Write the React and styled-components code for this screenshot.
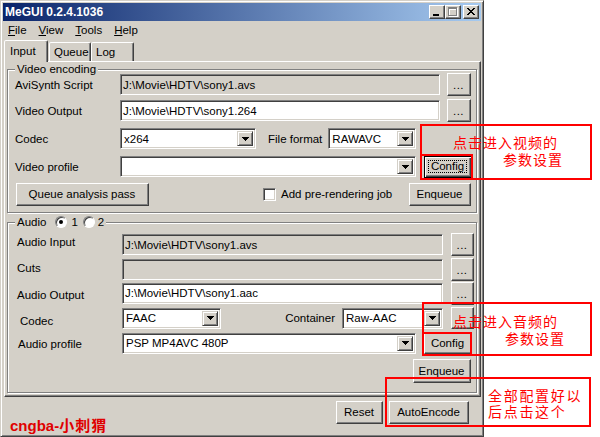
import React from "react";
import styled, { createGlobalStyle } from "styled-components";

const FACE = "#D4D0C8";
const FONT = `"Liberation Sans", Arial, sans-serif`;
const CJK = `"Noto Sans CJK SC", "Noto Sans CJK JP", sans-serif`;

const GlobalStyle = createGlobalStyle`
  html, body { margin: 0; padding: 0; background: #fff; }
  body { font-family: ${FONT}; font-size: 11.5px; color: #000; }
  * { box-sizing: border-box; }
`;

const Page = styled.div`
  position: relative;
  width: 600px;
  height: 437px;
  overflow: hidden;
  background: #fff;
`;

const Window = styled.div`
  width: 484px;
  height: 437px;
  background: ${FACE};
  border: 1px solid;
  border-color: ${FACE} #404040 #404040 ${FACE};
  box-shadow: inset 1px 1px 0 #fff, inset -1px -1px 0 #808080;
  padding: 2px;
  display: flex;
  flex-direction: column;
`;

const TitleBar = styled.div`
  height: 18px;
  flex: none;
  display: flex;
  align-items: center;
  padding: 0 2px;
  background: linear-gradient(to right, #0a246a, #a6caf0);
`;

const Title = styled.span`
  flex: 1;
  color: #fff;
  font-weight: bold;
  font-size: 12px;
  white-space: nowrap;
`;

const CaptionButton = styled.div`
  width: 16px;
  height: 14px;
  flex: none;
  margin-left: ${(p) => p.$ml || 0}px;
  background: ${FACE};
  border: 1px solid;
  border-color: #fff #404040 #404040 #fff;
  box-shadow: inset -1px -1px 0 #808080;
  display: flex;
`;

const MenuBar = styled.div`
  height: 18px;
  flex: none;
  display: flex;
  align-items: center;
  gap: 12px;
  padding-left: 5px;
`;

const MenuItem = styled.span`
  white-space: nowrap;
  u { text-decoration: underline; }
`;

const TabStrip = styled.div`
  height: 22px;
  flex: none;
  display: flex;
  align-items: flex-end;
  padding-left: 1px;
`;

const Tab = styled.div`
  width: ${(p) => p.$w}px;
  height: ${(p) => (p.$active ? 22 : 19)}px;
  margin-bottom: ${(p) => (p.$active ? -1 : 0)}px;
  margin-right: ${(p) => (p.$active ? 1 : 0)}px;
  position: relative;
  z-index: ${(p) => (p.$active ? 2 : 0)};
  background: ${FACE};
  border: 1px solid;
  border-bottom: none;
  border-color: #fff #404040 transparent #fff;
  box-shadow: inset -1px 0 0 #808080;
  border-radius: 2px 2px 0 0;
  padding: ${(p) => (p.$active ? "0 0 1px 5px" : "0 0 0 4px")};
  display: flex;
  align-items: center;
  white-space: nowrap;
`;

const Panel = styled.div`
  width: 477px;
  height: 336px;
  flex: none;
  margin-left: 1px;
  border: 1px solid;
  border-color: #fff #404040 #404040 #fff;
  box-shadow: inset -1px -1px 0 #808080;
  padding: 0 3px 0 2px;
  display: flex;
  flex-direction: column;
`;

const Group = styled.div`
  margin-top: ${(p) => p.$mt}px;
  border: 1px solid #808080;
  box-shadow: inset 1px 1px 0 #fff, 1px 1px 0 #fff;
  display: flex;
  flex-direction: column;
`;

const Legend = styled.div`
  align-self: flex-start;
  margin: -8px 0 -6px 7px;
  padding: 0 2px;
  height: 14px;
  line-height: 14px;
  background: ${FACE};
  display: flex;
  align-items: center;
  white-space: nowrap;
  position: relative;
`;

const GroupBody = styled.div`
  display: flex;
  flex-direction: column;
  padding: ${(p) => p.$pad};
`;

const Row = styled.div`
  display: flex;
  align-items: center;
  height: ${(p) => p.$h}px;
`;

const Label = styled.span`
  width: ${(p) => (p.$w === undefined ? "105px" : p.$w)};
  flex: none;
  white-space: nowrap;
  padding-left: ${(p) => p.$dx || 0}px;
  padding-top: ${(p) => (p.$dy > 0 ? p.$dy * 2 : 0)}px;
  padding-bottom: ${(p) => (p.$dy < 0 ? -p.$dy * 2 : 0)}px;
  margin-left: ${(p) => (p.$ml === "auto" ? "auto" : `${p.$ml || 0}px`)};
`;

const sunken = `
  border: 1px solid;
  border-color: #808080 #fff #fff #808080;
  box-shadow: inset 1px 1px 0 #404040, inset -1px -1px 0 ${FACE};
`;

const TextBox = styled.div`
  flex: 1;
  min-width: 0;
  height: 21px;
  background: ${(p) => (p.$disabled ? FACE : "#fff")};
  ${sunken}
  padding: 0 3px 0 2px;
  display: flex;
  align-items: center;
  white-space: nowrap;
  overflow: hidden;
`;

const Combo = styled.div`
  width: ${(p) => p.$w}px;
  flex: none;
  height: 21px;
  margin-left: ${(p) => p.$ml || 0}px;
  background: #fff;
  ${sunken}
  padding: 2px;
  display: flex;
  align-items: stretch;
`;

const ComboText = styled.span`
  flex: 1;
  padding-left: 1px;
  display: flex;
  align-items: center;
  white-space: nowrap;
  overflow: hidden;
`;

const DropButton = styled.span`
  width: 16px;
  flex: none;
  background: ${FACE};
  border: 1px solid;
  border-color: ${FACE} #404040 #404040 ${FACE};
  box-shadow: inset 1px 1px 0 #fff, inset -1px -1px 0 #808080;
  display: flex;
  align-items: center;
  justify-content: center;
`;

const Button = styled.div`
  width: ${(p) => p.$w}px;
  height: ${(p) => p.$h || 23}px;
  flex: none;
  margin-left: ${(p) => (p.$ml === "auto" ? "auto" : `${p.$ml || 0}px`)};
  margin-right: ${(p) => p.$mr || 0}px;
  background: ${FACE};
  border: 1px solid;
  border-color: ${(p) => (p.$default ? "#000" : "#fff #404040 #404040 #fff")};
  box-shadow: ${(p) =>
    p.$default
      ? "inset 1px 1px 0 #fff, inset -1px -1px 0 #404040, inset -2px -2px 0 #808080"
      : `inset -1px -1px 0 #808080, inset 1px 1px 0 ${FACE}`};
  display: flex;
  align-items: center;
  justify-content: center;
  white-space: nowrap;
  padding: ${(p) => (p.$default ? "3px 4px 4px 3px" : "0 1px 1px 0")};
`;

const FocusRect = styled.span`
  flex: 1;
  align-self: stretch;
  border: 1px dotted #000;
  display: flex;
  align-items: center;
  justify-content: center;
`;

const Dots = styled.span`
  padding-top: 2px;
  letter-spacing: 0.5px;
`;

const CheckBox = styled.span`
  width: 13px;
  height: 13px;
  flex: none;
  margin-left: ${(p) => p.$ml || 0}px;
  background: #fff;
  ${sunken}
`;

const CheckLabel = styled.span`
  margin-left: 5px;
  white-space: nowrap;
`;

const Radio = styled.span`
  width: 12px;
  height: 12px;
  flex: none;
  margin-left: ${(p) => p.$ml || 0}px;
  border-radius: 50%;
  background: #fff;
  border: 1px solid;
  border-color: #808080 #fff #fff #808080;
  box-shadow: inset 1px 1px 0 #404040, 0 0 0 0 transparent;
  display: flex;
  align-items: center;
  justify-content: center;
  &::after {
    content: "";
    width: 4px;
    height: 4px;
    border-radius: 50%;
    background: ${(p) => (p.$checked ? "#000" : "transparent")};
  }
`;

const RadioText = styled.span`
  margin-left: ${(p) => p.$ml}px;
`;

const Footer = styled.div`
  flex: 1;
  display: flex;
  align-items: flex-start;
  padding: 4px 12px 0 7px;
`;

const Watermark = styled.span`
  margin-top: 16px;
  line-height: 16px;
  color: #e00000;
  font-weight: bold;
  white-space: nowrap;
`;

const WatermarkLatin = styled.span`
  font-family: ${FONT};
  font-size: 15px;
`;

const WatermarkCJK = styled.span`
  font-family: ${CJK};
  font-size: 15px;
  letter-spacing: 1px;
`;

const RedBox = styled.div`
  position: absolute;
  left: ${(p) => p.$x}px;
  top: ${(p) => p.$y}px;
  width: ${(p) => p.$w}px;
  height: ${(p) => p.$h}px;
  border: 2px solid #f00;
  pointer-events: none;
`;

const Note = styled.div`
  position: absolute;
  left: ${(p) => p.$x}px;
  top: ${(p) => p.$y}px;
  color: #f00;
  font-family: ${CJK};
  font-size: 14px;
  letter-spacing: ${(p) => p.$ls || 1}px;
  line-height: ${(p) => p.$lh || 17}px;
  white-space: nowrap;
  pointer-events: none;
`;

const NoteLine = styled.div`
  padding-left: ${(p) => p.$indent || 0}px;
`;

const Arrow = () => (
  <svg width="7" height="4" viewBox="0 0 7 4">
    <path d="M0 0h7v1h-1v1h-1v1h-1v1h-1v-1h-1v-1h-1v-1h-1z" fill="#000" />
  </svg>
);

const MinIcon = () => (
  <svg width="14" height="12" viewBox="0 0 14 12">
    <rect x="3" y="8" width="6" height="2" fill="#000" />
  </svg>
);

const MaxIcon = () => (
  <svg width="14" height="12" viewBox="0 0 14 12">
    <path d="M3 2h9v9h-9z M4 4v6h7v-6z" fill="#fff" fillRule="evenodd" />
    <path d="M2 1h9v9h-9z M3 3v6h7v-6z" fill="#808080" fillRule="evenodd" />
  </svg>
);

const CloseIcon = () => {
  const rects = [];
  for (let i = 0; i < 7; i++) {
    rects.push(<rect key={`a${i}`} x={3 + i} y={2 + i} width="2" height="1" fill="#000" />);
    rects.push(<rect key={`b${i}`} x={9 - i} y={2 + i} width="2" height="1" fill="#000" />);
  }
  return (
    <svg width="14" height="12" viewBox="0 0 14 12">
      {rects}
    </svg>
  );
};

const ComboBox = ({ w, ml, children }) => (
  <Combo $w={w} $ml={ml}>
    <ComboText>{children}</ComboText>
    <DropButton>
      <Arrow />
    </DropButton>
  </Combo>
);

const Browse = ({ w = 24, ml = 7 }) => (
  <Button $w={w} $ml={ml}>
    <Dots>...</Dots>
  </Button>
);

export default function App() {
  return (
    <>
      <GlobalStyle />
      <Page>
        <Window>
          <TitleBar>
            <Title>MeGUI 0.2.4.1036</Title>
            <CaptionButton>
              <MinIcon />
            </CaptionButton>
            <CaptionButton>
              <MaxIcon />
            </CaptionButton>
            <CaptionButton $ml={2}>
              <CloseIcon />
            </CaptionButton>
          </TitleBar>

          <MenuBar>
            <MenuItem>
              <u>F</u>ile
            </MenuItem>
            <MenuItem>
              <u>V</u>iew
            </MenuItem>
            <MenuItem>
              <u>T</u>ools
            </MenuItem>
            <MenuItem>
              <u>H</u>elp
            </MenuItem>
          </MenuBar>

          <TabStrip>
            <Tab $w={44} $active>
              Input
            </Tab>
            <Tab $w={42}>Queue</Tab>
            <Tab $w={43}>Log</Tab>
          </TabStrip>

          <Panel>
            <Group $mt={7}>
              <Legend>Video encoding</Legend>
              <GroupBody $pad="2px 5px 4px 7px">
                <Row $h={25}>
                  <Label>AviSynth Script</Label>
                  <TextBox $disabled>J:\Movie\HDTV\sony1.avs</TextBox>
                  <Browse />
                </Row>
                <Row $h={27}>
                  <Label>Video Output</Label>
                  <TextBox>J:\Movie\HDTV\sony1.264</TextBox>
                  <Browse />
                </Row>
                <Row $h={29}>
                  <Label>Codec</Label>
                  <ComboBox w={136}>x264</ComboBox>
                  <Label $w="auto" $ml={12}>
                    File format
                  </Label>
                  <ComboBox w={88} ml={6}>
                    RAWAVC
                  </ComboBox>
                </Row>
                <Row $h={27}>
                  <Label>Video profile</Label>
                  <ComboBox w={296}></ComboBox>
                  <Button $w={48} $h={22} $ml={8} $default>
                    <FocusRect>Config</FocusRect>
                  </Button>
                </Row>
                <Row $h={28}>
                  <Button $w={133} $ml={1}>
                    Queue analysis pass
                  </Button>
                  <CheckBox $ml={114} />
                  <CheckLabel>Add pre-rendering job</CheckLabel>
                  <Button $w={62} $ml="auto">
                    Enqueue
                  </Button>
                </Row>
              </GroupBody>
            </Group>

            <Group $mt={9}>
              <Legend>
                Audio
                <Radio $ml={9} $checked />
                <RadioText $ml={4}>1</RadioText>
                <Radio $ml={5} />
                <RadioText $ml={3}>2</RadioText>
              </Legend>
              <GroupBody $pad="9px 2px 5px 9px">
                <Row $h={25}>
                  <Label $dy={-3}>Audio Input</Label>
                  <TextBox $disabled>J:\Movie\HDTV\sony1.avs</TextBox>
                  <Browse w={23} ml={8} />
                </Row>
                <Row $h={24}>
                  <Label $dy={-1}>Cuts</Label>
                  <TextBox $disabled />
                  <Browse w={23} ml={8} />
                </Row>
                <Row $h={24}>
                  <Label $dy={2}>Audio Output</Label>
                  <TextBox>J:\Movie\HDTV\sony1.aac</TextBox>
                  <Browse w={23} ml={8} />
                </Row>
                <Row $h={26}>
                  <Label $dx={3} $dy={3}>
                    Codec
                  </Label>
                  <ComboBox w={99}>FAAC</ComboBox>
                  <Label $w="auto" $ml="auto">
                    Container
                  </Label>
                  <ComboBox w={101} ml={7}>
                    Raw-AAC
                  </ComboBox>
                  <Button $w={23} $h={22} $ml={8} />
                </Row>
                <Row $h={24}>
                  <Label $dx={1} $dy={1}>
                    Audio profile
                  </Label>
                  <ComboBox w={294}>PSP MP4AVC 480P</ComboBox>
                  <Button $w={48} $h={22} $ml={8}>
                    Config
                  </Button>
                </Row>
                <Row $h={32}>
                  <Button $w={58} $h={24} $ml="auto" $mr={3}>
                    Enqueue
                  </Button>
                </Row>
              </GroupBody>
            </Group>
          </Panel>

          <Footer>
            <Watermark>
              <WatermarkLatin>cngba-</WatermarkLatin>
              <WatermarkCJK>小刺猬</WatermarkCJK>
            </Watermark>
            <Button $w={47} $ml="auto">
              Reset
            </Button>
            <Button $w={80} $ml={6}>
              AutoEncode
            </Button>
          </Footer>
        </Window>

        <RedBox $x={420} $y={124} $w={172} $h={56} />
        <RedBox $x={420} $y={154} $w={53} $h={26} />
        <Note $x={453} $y={134}>
          <NoteLine>点击进入视频的</NoteLine>
          <NoteLine $indent={50}>参数设置</NoteLine>
        </Note>

        <RedBox $x={422} $y={302} $w={170} $h={54} />
        <RedBox $x={422} $y={332} $w={50} $h={24} />
        <Note $x={453} $y={313}>
          <NoteLine>点击进入音频的</NoteLine>
          <NoteLine $indent={52}>参数设置</NoteLine>
        </Note>

        <RedBox $x={385} $y={377} $w={206} $h={50} />
        <Note $x={488} $y={387} $ls={1.7} $lh={16}>
          <NoteLine>全部配置好以</NoteLine>
          <NoteLine>后点击这个</NoteLine>
        </Note>
      </Page>
    </>
  );
}
